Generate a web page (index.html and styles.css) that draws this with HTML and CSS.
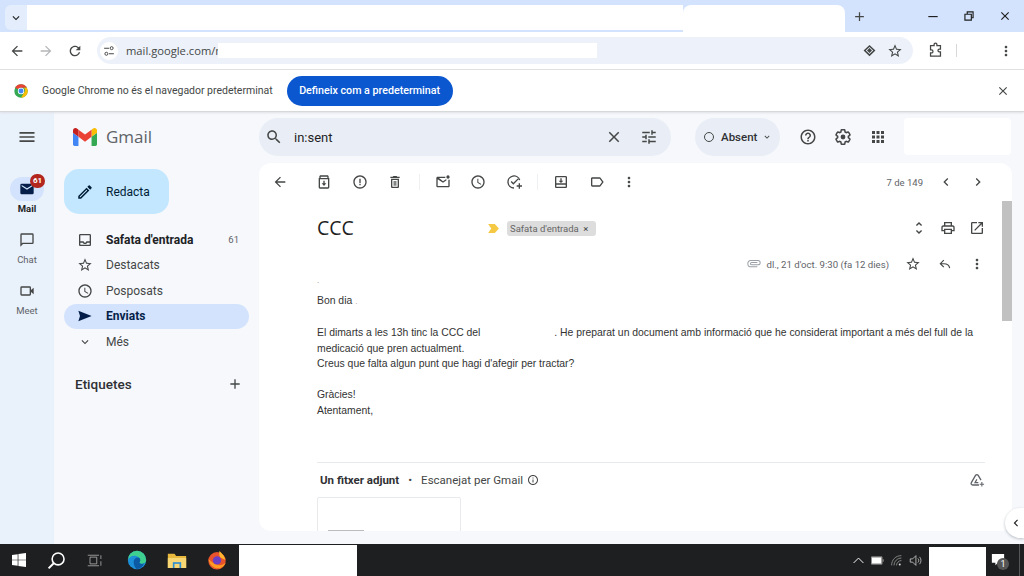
FILE: index.html
```html
<!DOCTYPE html>
<html lang="ca">
  <head>
    <meta charset="UTF-8" />
    <title>CCC - Gmail</title>
    <link rel="stylesheet" href="styles.css">
  </head>
  <body>
    <svg class="sprite" aria-hidden="true">
      <symbol id="i-back" viewBox="0 0 24 24"><path d="M20 11H7.83l5.59-5.59L12 4l-8 8 8 8 1.41-1.41L7.83 13H20v-2z"/></symbol>
      <symbol id="i-forward" viewBox="0 0 24 24"><path d="M12 4l-1.41 1.41L16.17 11H4v2h12.17l-5.58 5.59L12 20l8-8z"/></symbol>
      <symbol id="i-reload" viewBox="0 0 24 24"><path d="M17.65 6.35C16.2 4.9 14.21 4 12 4c-4.42 0-7.99 3.58-7.99 8s3.57 8 7.99 8c3.73 0 6.84-2.55 7.73-6h-2.08c-.82 2.33-3.04 4-5.65 4-3.31 0-6-2.69-6-6s2.69-6 6-6c1.66 0 3.14.69 4.22 1.78L13 11h7V4l-2.35 2.35z"/></symbol>
      <symbol id="i-close" viewBox="0 0 24 24"><path d="M19 6.41L17.59 5 12 10.59 6.41 5 5 6.41 10.59 12 5 17.59 6.41 19 12 13.41 17.59 19 19 17.59 13.41 12z"/></symbol>
      <symbol id="i-search" viewBox="0 0 24 24"><path d="M15.5 14h-.79l-.28-.27C15.41 12.59 16 11.11 16 9.5 16 5.91 13.09 3 9.5 3S3 5.91 3 9.5 5.91 16 9.5 16c1.61 0 3.09-.59 4.23-1.57l.27.28v.79l5 4.99L20.49 19l-4.99-5zm-6 0C7.01 14 5 11.99 5 9.5S7.01 5 9.5 5 14 7.01 14 9.5 11.99 14 9.5 14z"/></symbol>
      <symbol id="i-star" viewBox="0 0 24 24"><path d="M22 9.24l-7.19-.62L12 2 9.19 8.63 2 9.24l5.46 4.73L5.82 21 12 17.27 18.18 21l-1.63-7.03L22 9.24zM12 15.4l-3.76 2.27 1-4.28-3.32-2.88 4.38-.38L12 6.1l1.71 4.04 4.38.38-3.32 2.88 1 4.28L12 15.4z"/></symbol>
      <symbol id="i-more" viewBox="0 0 24 24"><path d="M12 8c1.1 0 2-.9 2-2s-.9-2-2-2-2 .9-2 2 .9 2 2 2zm0 2c-1.1 0-2 .9-2 2s.9 2 2 2 2-.9 2-2-.9-2-2-2zm0 6c-1.1 0-2 .9-2 2s.9 2 2 2 2-.9 2-2-.9-2-2-2z"/></symbol>
      <symbol id="i-clock" viewBox="0 0 24 24"><path d="M11.99 2C6.47 2 2 6.48 2 12s4.47 10 9.99 10C17.52 22 22 17.52 22 12S17.52 2 11.99 2zM12 20c-4.42 0-8-3.58-8-8s3.58-8 8-8 8 3.58 8 8-3.58 8-8 8zm.5-13H11v6l5.25 3.15.75-1.23-4.5-2.67z"/></symbol>
      <symbol id="i-help" viewBox="0 0 24 24"><path d="M11 18h2v-2h-2v2zm1-16C6.48 2 2 6.48 2 12s4.48 10 10 10 10-4.48 10-10S17.52 2 12 2zm0 18c-4.41 0-8-3.59-8-8s3.59-8 8-8 8 3.59 8 8-3.59 8-8 8zm0-14c-2.21 0-4 1.79-4 4h2c0-1.1.9-2 2-2s2 .9 2 2c0 2-3 1.75-3 5h2c0-2.25 3-2.5 3-5 0-2.21-1.79-4-4-4z"/></symbol>
      <symbol id="i-trash" viewBox="0 0 24 24"><path d="M6 19c0 1.1.9 2 2 2h8c1.1 0 2-.9 2-2V7H6v12zM8 9h8v10H8V9zm7.5-5l-1-1h-5l-1 1H5v2h14V4z"/><path d="M10 10.500h1.500v7H10zM12.500 10.500H14v7h-1.500z"/></symbol>
      <symbol id="i-print" viewBox="0 0 24 24"><path d="M19 8h-1V3H6v5H5c-1.66 0-3 1.34-3 3v6h4v4h12v-4h4v-6c0-1.66-1.34-3-3-3zM8 5h8v3H8V5zm8 12v2H8v-4h8v2zm2-2v-2H6v2H4v-4c0-.55.45-1 1-1h14c.55 0 1 .45 1 1v4h-2z"/></symbol>
      <symbol id="i-open" viewBox="0 0 24 24"><path d="M19 19H5V5h7V3H5c-1.11 0-2 .9-2 2v14c0 1.1.89 2 2 2h14c1.1 0 2-.9 2-2v-7h-2v7zM14 3v2h3.59l-9.83 9.83 1.41 1.41L19 6.41V10h2V3h-7z"/></symbol>
      <symbol id="i-tune" viewBox="0 0 24 24"><path d="M3 17v2h6v-2H3zM3 5v2h10V5H3zm10 16v-2h8v-2h-8v-2h-2v6h2zM7 9v2H3v2h4v2h2V9H7zm14 4v-2H11v2h10zm-6-4h2V7h4V5h-4V3h-2v6z"/></symbol>
      <symbol id="i-gear" viewBox="0 0 24 24"><path fill="none" stroke="currentColor" stroke-width="2" d="M19.14 12.94c.04-.3.06-.61.06-.94 0-.32-.02-.64-.07-.94l2.03-1.58c.18-.14.23-.41.12-.61l-1.92-3.32c-.12-.22-.37-.29-.59-.22l-2.39.96c-.5-.38-1.03-.7-1.62-.94l-.36-2.54c-.04-.24-.24-.41-.48-.41h-3.84c-.24 0-.43.17-.47.41l-.36 2.54c-.59.24-1.13.57-1.62.94l-2.39-.96c-.22-.08-.47 0-.59.22L2.74 8.87c-.12.21-.08.47.12.61l2.03 1.58c-.05.3-.09.63-.09.94s.02.64.07.94l-2.03 1.58c-.18.14-.23.41-.12.61l1.92 3.32c.12.22.37.29.59.22l2.39-.96c.5.38 1.03.7 1.62.94l.36 2.54c.05.24.24.41.48.41h3.84c.24 0 .44-.17.47-.41l.36-2.54c.59-.24 1.13-.56 1.62-.94l2.39.96c.22.08.47 0 .59-.22l1.92-3.32c.12-.22.07-.47-.12-.61l-2.01-1.58z"/><circle cx="12" cy="12" r="3.200"/></symbol>
      <symbol id="i-apps" viewBox="0 0 24 24"><path d="M4 8h4V4H4v4zm6 12h4v-4h-4v4zm-6 0h4v-4H4v4zm0-6h4v-4H4v4zm6 0h4v-4h-4v4zm6-10v4h4V4h-4zm-6 4h4V4h-4v4zm6 6h4v-4h-4v4zm0 6h4v-4h-4v4z"/></symbol>
      <symbol id="i-chev-left" viewBox="0 0 24 24"><path d="M15.41 7.41L14 6l-6 6 6 6 1.41-1.41L10.83 12z"/></symbol>
      <symbol id="i-chev-right" viewBox="0 0 24 24"><path d="M8.59 16.59L10 18l6-6-6-6-1.41 1.41L13.17 12z"/></symbol>
      <symbol id="i-chev-down" viewBox="0 0 24 24"><path d="M7.41 8.59L12 13.17l4.59-4.58L18 10l-6 6-6-6z"/></symbol>
      <symbol id="i-plus" viewBox="0 0 24 24"><path d="M19 13h-6v6h-2v-6H5v-2h6V5h2v6h6v2z"/></symbol>
      <symbol id="i-menu" viewBox="0 0 24 24"><path d="M3 18h18v-2H3v2zm0-5h18v-2H3v2zm0-7v2h18V6H3z"/></symbol>
      <symbol id="i-unfold" viewBox="0 0 24 24"><path d="M12 5.830L15.170 9l1.410-1.410L12 3 7.410 7.590 8.830 9 12 5.830zm0 12.340L8.830 15l-1.410 1.410L12 21l4.590-4.590L15.170 15 12 18.170z"/></symbol>
      <symbol id="i-info" viewBox="0 0 24 24"><path d="M11 7h2v2h-2zm0 4h2v6h-2zm1-9C6.480 2 2 6.480 2 12s4.480 10 10 10 10-4.480 10-10S17.520 2 12 2zm0 18c-4.410 0-8-3.590-8-8s3.590-8 8-8 8 3.590 8 8-3.590 8-8 8z"/></symbol>
      <symbol id="i-error" viewBox="0 0 24 24"><path d="M11 7h2v7h-2zm0 8h2v2h-2zm1-13C6.480 2 2 6.480 2 12s4.480 10 10 10 10-4.480 10-10S17.520 2 12 2zm0 18c-4.410 0-8-3.590-8-8s3.590-8 8-8 8 3.590 8 8-3.590 8-8 8z"/></symbol>
      <symbol id="i-reply" viewBox="0 0 24 24"><path d="M20 19c-.6-4-3.400-7.500-10-7.500H5M10 5.500l-6 6 6 6" fill="none" stroke="currentColor" stroke-width="2"/></symbol>
      <symbol id="i-inbox" viewBox="0 0 24 24"><path d="M19 3H5c-1.100 0-2 .9-2 2v14c0 1.100.9 2 2 2h14c1.100 0 2-.9 2-2V5c0-1.100-.9-2-2-2zm0 16H5v-3h3.560c.69 1.190 1.970 2 3.450 2s2.750-.81 3.450-2H19v3zm0-5h-5c0 1.100-.9 2-2 2s-2-.9-2-2H5V5h14v9z"/></symbol>
      <symbol id="i-archive" viewBox="0 0 24 24"><path d="M20 6h-1V4c0-1.100-.9-2-2-2H7c-1.100 0-2 .9-2 2v2H4v14c0 1.100.9 2 2 2h12c1.100 0 2-.9 2-2V6zM7 4h10v2H7V4zm11 16H6V8h12v12z"/><path d="M11 10h2v4h2.500L12 18l-3.500-4H11z"/></symbol>
      <symbol id="i-unread" viewBox="0 0 24 24"><path d="M20 8.500V18H4V8l8 5 5-3.100V7.500L12 11 6 6h9.500V4H4c-1.100 0-2 .9-2 2v12c0 1.100.9 2 2 2h16c1.100 0 2-.9 2-2V8.500z"/><circle cx="19.500" cy="4.500" r="2.500"/></symbol>
      <symbol id="i-task" viewBox="0 0 24 24"><path d="M12 20a8 8 0 1 1 7.600-10.500l1.900-.6A10 10 0 1 0 12 22zM8.500 10.600L7 12l4 4 8-8-1.400-1.400L11 13.200zM19 14v3h-3v2h3v3h2v-3h3v-2h-3v-3z"/></symbol>
      <symbol id="i-move" viewBox="0 0 24 24"><path d="M19 3H5c-1.100 0-2 .9-2 2v14c0 1.100.9 2 2 2h14c1.100 0 2-.9 2-2V5c0-1.100-.9-2-2-2zm0 16H5v-3h14zM5 14V5h14v9z"/><path d="M11 6.500h2V10h2.500L12 13.500 8.500 10H11z"/></symbol>
      <symbol id="i-label" viewBox="0 0 24 24"><path d="M17.630 5.840C17.270 5.330 16.670 5 16 5L5 5.010C3.900 5.010 3 5.900 3 7v10c0 1.100.9 1.990 2 1.990L16 19c.67 0 1.270-.33 1.630-.84L22 12l-4.370-6.160zM16 17H5V7h11l3.550 5L16 17z"/></symbol>
      <symbol id="i-clip" viewBox="0 0 24 24"><path d="M2 11.500A5.500 5.500 0 0 1 7.500 6H18a4 4 0 0 1 0 8H8.500a2.500 2.500 0 0 1 0-5H17v1.500H8.500a1 1 0 0 0 0 2H18a2.500 2.500 0 0 0 0-5H7.500a4 4 0 0 0 0 8H17V17H7.500A5.500 5.500 0 0 1 2 11.500z"/></symbol>
      <symbol id="i-drive" viewBox="0 0 24 24"><path d="M15 19.500H5.500c-1.800 0-3-1.900-2-3.500L9.800 5c.9-1.500 3.100-1.500 4 0l4.200 7.300" fill="none" stroke="currentColor" stroke-width="2"/><path d="M11.800 11L9 16h5" fill="none" stroke="currentColor" stroke-width="1.800"/><path d="M18.500 15v2.500H16v1.600h2.500v2.500h1.600v-2.500h2.500v-1.600h-2.500V15z"/></symbol>
    </svg>

    <div class="tabstrip">
      <div class="tab-search"><svg class="ico ico-s"><use href="#i-chev-down"/></svg></div>
      <div class="tab-blank"></div>
      <div class="tab-active"></div>
      <svg class="ico tab-new"><use href="#i-plus"/></svg>
      <div class="win-btns">
        <svg class="ico" viewBox="0 0 12 12"><path d="M2 6h8v1H2z"/></svg>
        <svg class="ico" viewBox="0 0 12 12"><path d="M4 2h6v6H8.500v2H2V4h2zM5 3v1h3.500v3H9V3zM3 5v4h4.500V5z"/></svg>
        <svg class="ico" viewBox="0 0 24 24"><use href="#i-close"/></svg>
      </div>
    </div>

    <div class="toolbar">
      <svg class="ico nav-btn"><use href="#i-back"/></svg>
      <svg class="ico nav-btn nav-off"><use href="#i-forward"/></svg>
      <svg class="ico nav-btn"><use href="#i-reload"/></svg>
      <div class="omnibox">
        <span class="site-info">
          <svg class="ico ico-xs" viewBox="0 0 16 16"><path d="M1.500 3.500h6.500v1.400H1.500zM8 11h6.500v1.400H8z"/><circle cx="11.500" cy="4.200" r="2" fill="none" stroke="currentColor" stroke-width="1.300"/><circle cx="4.500" cy="11.700" r="2" fill="none" stroke="currentColor" stroke-width="1.300"/></svg>
        </span>
        <span class="url">mail.google.com/m</span>
        <span class="url-mask"></span>
        <svg class="ico lens" viewBox="0 0 24 24"><path d="M12 3l9.500 9-9.500 9-9.500-9zM12 6.500L6 12l6 5.500 6-5.500z" /><path d="M12 8l4 4-4 4-4-4z"/></svg>
        <svg class="ico ico-m"><use href="#i-star"/></svg>
      </div>
      <svg class="ico ext" viewBox="0 0 24 24"><path d="M10 3.500a2 2 0 0 1 4 0V5h5v5h-1.500a2 2 0 0 0 0 4H19v6H5v-4.500h1.200a2.200 2.200 0 0 0 0-4.500H5V5h5z" fill="none" stroke="currentColor" stroke-width="1.800"/></svg>
      <span class="tool-sep"></span>
      <svg class="ico ico-m tool-more"><use href="#i-more"/></svg>
    </div>

    <div class="infobar">
      <svg class="chrome-logo" viewBox="0 0 48 48">
        <circle cx="24" cy="24" r="23" fill="#34a853"/>
        <path d="M24 1a23 23 0 0 1 20 11.500H24a11.500 11.500 0 0 0-10 5.800L4 12.500A23 23 0 0 1 24 1z" fill="#ea4335"/>
        <path d="M44 12.500A23 23 0 0 1 24 47l10-17.300a11.500 11.500 0 0 0 0-17.200z" fill="#fbbc04"/>
        <circle cx="24" cy="24" r="11" fill="#fff"/>
        <circle cx="24" cy="24" r="8.500" fill="#4285f4"/>
      </svg>
      <span class="info-text">Google Chrome no és el navegador predeterminat</span>
      <button class="info-btn">Defineix com a predeterminat</button>
      <svg class="ico ico-m info-close"><use href="#i-close"/></svg>
    </div>

    <div class="app">
      <nav class="rail">
        <svg class="ico rail-menu"><use href="#i-menu"/></svg>
        <div class="rail-item rail-on">
          <span class="rail-pill">
            <svg class="ico ico-m" viewBox="0 0 24 24"><path d="M20 4H4a2 2 0 0 0-2 2v12a2 2 0 0 0 2 2h16a2 2 0 0 0 2-2V6a2 2 0 0 0-2-2zm-8 9L4 8V6l8 5 8-5v2z"/></svg>
            <span class="badge">61</span>
          </span>
          <span class="rail-label">Mail</span>
        </div>
        <div class="rail-item">
          <span class="rail-pill">
            <svg class="ico ico-m" viewBox="0 0 24 24"><path d="M20 2H4a2 2 0 0 0-2 2v18l4-4h14a2 2 0 0 0 2-2V4a2 2 0 0 0-2-2zm0 14H5.200L4 17.200V4h16z"/></svg>
          </span>
          <span class="rail-label">Chat</span>
        </div>
        <div class="rail-item">
          <span class="rail-pill">
            <svg class="ico ico-m" viewBox="0 0 24 24"><path d="M18 10.500V7a2 2 0 0 0-2-2H4a2 2 0 0 0-2 2v10a2 2 0 0 0 2 2h12a2 2 0 0 0 2-2v-3.500l4 3.500V7zM16 17H4V7h12z"/></svg>
          </span>
          <span class="rail-label">Meet</span>
        </div>
      </nav>

      <aside class="side">
        <div class="brand">
          <svg class="gmail-logo" viewBox="52 42 88 66">
            <path fill="#4285f4" d="M58 108h14V74L52 59v43c0 3.320 2.690 6 6 6"/>
            <path fill="#34a853" d="M120 108h14c3.320 0 6-2.690 6-6V59l-20 15"/>
            <path fill="#fbbc04" d="M120 48v26l20-15v-8c0-7.420-8.470-11.650-14.400-7.200"/>
            <path fill="#ea4335" d="M72 74V48l24 18 24-18v26L96 92"/>
            <path fill="#c5221f" d="M52 51v8l20 15V48l-5.600-4.200c-5.940-4.450-14.400-.22-14.400 7.200"/>
          </svg>
          <span class="brand-name">Gmail</span>
        </div>
        <button class="compose">
          <svg class="ico ico-l" viewBox="0 0 24 24"><path d="M3 17.250V21h3.750L17.810 9.940l-3.750-3.750zM5.920 19H5v-.92l9.060-9.060.92.92zM20.710 7.040a1 1 0 0 0 0-1.410l-2.340-2.340a1 1 0 0 0-1.410 0l-1.830 1.830 3.750 3.750z"/></svg>
          Redacta
        </button>
        <ul class="folders">
          <li class="folder folder-bold"><svg class="ico ico-m"><use href="#i-inbox"/></svg>Safata d'entrada<span class="count">61</span></li>
          <li class="folder"><svg class="ico ico-m"><use href="#i-star"/></svg>Destacats</li>
          <li class="folder"><svg class="ico ico-m"><use href="#i-clock"/></svg>Posposats</li>
          <li class="folder folder-on"><svg class="ico ico-m" viewBox="0 0 24 24"><path d="M2 20l20-8L2 4l2.500 8z"/></svg>Enviats</li>
          <li class="folder"><svg class="ico ico-s"><use href="#i-chev-down"/></svg>Més</li>
        </ul>
        <div class="labels-head">Etiquetes<svg class="ico ico-m"><use href="#i-plus"/></svg></div>
      </aside>

      <main class="main">
        <header class="topbar">
          <div class="searchbox">
            <svg class="ico ico-l"><use href="#i-search"/></svg>
            <span class="query">in:sent</span>
            <svg class="ico ico-l search-x"><use href="#i-close"/></svg>
            <svg class="ico ico-l"><use href="#i-tune"/></svg>
          </div>
          <div class="status">
            <span class="status-dot"></span>Absent<svg class="ico ico-xs"><use href="#i-chev-down"/></svg>
          </div>
          <div class="top-icons">
            <svg class="ico ico-l"><use href="#i-help"/></svg>
            <svg class="ico ico-l"><use href="#i-gear"/></svg>
            <svg class="ico ico-l"><use href="#i-apps"/></svg>
          </div>
          <div class="account-mask"></div>
        </header>

        <section class="card">
          <div class="mail-tools">
            <span class="slot slot-back"><svg class="ico ico-m"><use href="#i-back"/></svg></span>
            <span class="slot"><svg class="ico ico-m"><use href="#i-archive"/></svg></span>
            <span class="slot"><svg class="ico ico-m"><use href="#i-error"/></svg></span>
            <span class="slot"><svg class="ico ico-m"><use href="#i-trash"/></svg></span>
            <span class="slot-sep"></span>
            <span class="slot"><svg class="ico ico-m"><use href="#i-unread"/></svg></span>
            <span class="slot"><svg class="ico ico-m"><use href="#i-clock"/></svg></span>
            <span class="slot"><svg class="ico ico-m"><use href="#i-task"/></svg></span>
            <span class="slot-sep"></span>
            <span class="slot"><svg class="ico ico-m"><use href="#i-move"/></svg></span>
            <span class="slot"><svg class="ico ico-m"><use href="#i-label"/></svg></span>
            <span class="slot slot-tight"><svg class="ico ico-m"><use href="#i-more"/></svg></span>
            <span class="pager">7 de 149</span>
            <span class="slot slot-page"><svg class="ico ico-m"><use href="#i-chev-left"/></svg></span>
            <span class="slot slot-page"><svg class="ico ico-m"><use href="#i-chev-right"/></svg></span>
          </div>

          <div class="mail-wrap">
            <article class="mail">
              <div class="subject-row">
                <h1 class="subject">CCC</h1>
                <svg class="marker" viewBox="0 0 12 10"><path d="M0 0h7.500L12 5 7.500 10H0l3.500-5z"/></svg>
                <span class="chip">Safata d'entrada <b>×</b></span>
                <span class="subject-tools">
                  <svg class="ico ico-m"><use href="#i-unfold"/></svg>
                  <svg class="ico ico-m"><use href="#i-print"/></svg>
                  <svg class="ico ico-m"><use href="#i-open"/></svg>
                </span>
              </div>
              <div class="meta-row">
                <svg class="ico ico-m clip"><use href="#i-clip"/></svg>
                <span class="date">dl., 21 d'oct. 9:30 (fa 12 dies)</span>
                <svg class="ico ico-m meta-star"><use href="#i-star"/></svg>
                <svg class="ico ico-s meta-reply"><use href="#i-reply"/></svg>
                <svg class="ico ico-m meta-more"><use href="#i-more"/></svg>
              </div>
              <div class="msg">
                <p class="msg-dot">.</p>
                <p class="msg-hi">Bon dia <small>.</small></p>
                <p>El dimarts a les 13h tinc la CCC del <span class="name-mask"></span>. He preparat un document amb informació que he considerat important a més del full de la medicació que pren actualment.<br>Creus que falta algun punt que hagi d'afegir per tractar?</p>
                <p>Gràcies!<br>Atentament,</p>
              </div>
              <div class="attach">
                <div class="attach-head">
                  <b>Un fitxer adjunt</b><span class="attach-dot">•</span>Escanejat per Gmail
                  <svg class="ico ico-xs attach-info"><use href="#i-info"/></svg>
                  <svg class="ico ico-m attach-drive"><use href="#i-drive"/></svg>
                </div>
                <div class="attach-card"><span class="attach-line"></span></div>
              </div>
            </article>
            <div class="scrollbar"><div class="scroll-thumb"></div></div>
          </div>
        </section>
        <button class="panel-toggle"><svg class="ico ico-s"><use href="#i-chev-left"/></svg></button>
      </main>
    </div>

    <footer class="taskbar">
      <svg class="tb-win" viewBox="0 0 16 16"><path fill="#fff" d="M0 2.200l6.500-.9v6.300H0zM7.300 1.200L16 0v7.600H7.300zM0 8.400h6.500v6.300L0 13.800zM7.300 8.400H16V16l-8.700-1.200z"/></svg>
      <svg class="tb-search" viewBox="0 0 24 24"><circle cx="14" cy="10" r="7.500" fill="none" stroke="#fff" stroke-width="2"/><path d="M8.500 15.500L2 22" stroke="#fff" stroke-width="2.500"/></svg>
      <svg class="tb-view" viewBox="0 0 20 16"><path fill="none" stroke="#bbb" d="M4 3.500h9v9H4zM1 1h15M1 15h15M18.500 1v5M18.500 9v6"/></svg>
      <svg class="tb-app tb-edge" viewBox="0 0 24 24">
        <circle cx="12" cy="12" r="11" fill="#1d8fd8"/>
        <path d="M1 12a11 11 0 0 1 22 0c0 3-2.500 4.500-5 4.500-2 0-3.500-.7-3.500-1.500 0-.6 1-1 1-2.500C15.500 9 12 7 9 7c-4 0-7 2.500-8 5z" fill="#3fcf8e"/>
        <path d="M8 14c0-3 2.500-5 5-5 2 0 3 1.500 3 3.500 0 1-1 1.500-1 2.500 0 1.500 3 2.500 5.500 1A11 11 0 0 1 12 23c-2.500-1.500-4-5-4-9z" fill="#0c59a4"/>
      </svg>
      <svg class="tb-app tb-folder" viewBox="0 0 24 20">
        <path d="M1 2h8l2 2.500h12V19H1z" fill="#e8b93c"/>
        <path d="M1 7h22v12H1z" fill="#f7d774"/>
        <path d="M7 12h10v7H7z" fill="#2f8fd3"/>
        <path d="M9 14h6v5H9z" fill="#f7d774"/>
      </svg>
      <svg class="tb-app tb-fox" viewBox="0 0 24 24">
        <circle cx="12" cy="13" r="10.500" fill="#e8532b"/>
        <path d="M15 1c2 3 6 5 7 11l-6-3c-1-2-2-4-1-8z" fill="#ffb52e"/>
        <path d="M2 11c1 7 6 11 11 11 4 0 8-2.500 9.500-7-2 2-5 4-9 3-4-.8-7-3-11.500-7z" fill="#ff9a23"/>
        <circle cx="12" cy="12.500" r="5" fill="#6b3fc4"/>
      </svg>
      <div class="tb-mask"></div>
      <div class="tray">
        <svg class="tray-ico" viewBox="0 0 16 16"><path d="M2 11l6-6 6 6" fill="none" stroke="#fff" stroke-width="1.200"/></svg>
        <svg class="tray-ico" viewBox="0 0 16 16"><path fill="#fff" d="M1 4h12v8H1z"/><path fill="none" stroke="#aaa" d="M.5 3.500h13v9H.5zM15 6.500v3"/></svg>
        <svg class="tray-ico" viewBox="0 0 16 16"><path fill="none" stroke="#999" d="M2 14C2 7 7 2 14 2M5 14c0-5 4-9 9-9M8 14c0-3 3-6 6-6"/><circle cx="12" cy="13" r="1.200" fill="#ddd"/></svg>
        <svg class="tray-ico" viewBox="0 0 16 16"><path fill="none" stroke="#ccc" d="M1.500 6h3l4-4v12l-4-4h-3zM11 5.500c1.300 1.300 1.300 3.700 0 5M13 3.500c2.300 2.300 2.300 6.700 0 9"/></svg>
        <div class="clock-mask"></div>
        <span class="notify">
          <svg class="notify-ico" viewBox="0 0 16 16"><path fill="#fff" d="M1 1h14v10H8l-3 3v-3H1z"/></svg>
          <span class="notify-num">1</span>
        </span>
        <span class="show-desk"></span>
      </div>
    </footer>
  </body>
</html>
```

FILE: styles.css
```css
* {
  box-sizing: border-box;
}
html,
body {
  margin: 0;
  padding: 0;
  width: 1024px;
  height: 576px;
  overflow: hidden;
}
body {
  font-family: Roboto, "Liberation Sans", sans-serif;
  color: #1f1f1f;
  background: #fff;
  display: flex;
  flex-direction: column;
}
p,
h1,
ul {
  margin: 0;
  padding: 0;
}
button {
  border: none;
  font-family: inherit;
  padding: 0;
}
.sprite {
  display: none;
}

/* icon sizes */
.ico {
  width: 16px;
  height: 16px;
  fill: currentColor;
  color: #444746;
  flex: none;
}
.ico-xs {
  width: 12px;
  height: 12px;
}
.ico-s {
  width: 14px;
  height: 14px;
}
.ico-m {
  width: 16px;
  height: 16px;
}
.ico-l {
  width: 18px;
  height: 18px;
}

/* browser tabs */
.tabstrip {
  height: 32px;
  flex: none;
  background: #d3e3fd;
  display: flex;
  align-items: flex-start;
  padding: 5px 0 0 5px;
}
.tab-search {
  width: 22px;
  height: 25px;
  background: #e4edfb;
  border-radius: 6px 0 0 6px;
  display: flex;
  align-items: center;
  justify-content: center;
}
.tab-search .ico {
  color: #1f1f1f;
}
.tab-blank {
  width: 656px;
  height: 25px;
  background: #fff;
}
.tab-active {
  width: 162px;
  height: 27px;
  background: #fff;
  border-radius: 8px 8px 0 0;
}
.tab-new {
  width: 15px;
  height: 15px;
  margin: 4px 0 0 7px;
}
.win-btns {
  display: flex;
  gap: 22px;
  margin: 4px 0 0 auto;
  padding-right: 12px;
}
.win-btns .ico {
  width: 14px;
  height: 14px;
  color: #1f1f1f;
}

/* address bar */
.toolbar {
  height: 38px;
  flex: none;
  background: #fff;
  border-radius: 8px 8px 0 0;
  border-bottom: 1px solid #e0e0e0;
  display: flex;
  align-items: center;
  padding: 5px 10px 5px 9px;
}
.nav-btn {
  margin-right: 13px;
}
.nav-off {
  color: #b5b7b9;
}
.omnibox {
  width: 816px;
  height: 27px;
  margin-left: 1px;
  background: #edf2fa;
  border-radius: 14px;
  display: flex;
  align-items: center;
  padding-right: 10px;
  font-size: 12px;
  color: #444746;
}
.site-info {
  width: 18px;
  height: 18px;
  margin-left: 3px;
  border-radius: 50%;
  background: #fff;
  display: flex;
  align-items: center;
  justify-content: center;
  color: #444746;
}
.url {
  margin-left: 8px;
  width: 92px;
  overflow: hidden;
  white-space: nowrap;
  font-family: "Open Sans", Roboto, sans-serif;
  font-size: 11.200px;
}
.url-mask {
  width: 379px;
  height: 15px;
  background: #fff;
}
.lens {
  width: 15px;
  height: 15px;
  margin-left: auto;
  margin-right: 10px;
}
.ext {
  width: 17px;
  height: 17px;
  margin-left: 14px;
}
.tool-sep {
  width: 1px;
  height: 13px;
  background: #d8d8d8;
  margin-left: 12px;
}
.tool-more {
  margin-left: auto;
}

/* default browser bar */
.infobar {
  height: 42px;
  flex: none;
  background: #fff;
  border-bottom: 1px solid #d6d8da;
  display: flex;
  align-items: center;
  padding-left: 14px;
  box-shadow: 0 1px 2px #dfe1e5;
  position: relative;
}
.chrome-logo {
  width: 14px;
  height: 14px;
}
.info-text {
  margin-left: 14px;
  color: #444746;
  font-size: 10.480px;
}
.info-btn {
  margin-left: 14px;
  width: 166px;
  height: 30px;
  background: #0b57d0;
  color: #fff;
  border-radius: 15px;
  font-size: 10.700px;
  font-weight: 500;
}
.info-close {
  margin-left: auto;
  margin-right: 14px;
  width: 14px;
  height: 14px;
}

/* gmail */
.app {
  height: 432px;
  flex: none;
  display: flex;
  background: #f6f8fc;
}
.rail {
  width: 54px;
  flex: none;
  background: #e9f1fb;
  display: flex;
  flex-direction: column;
  align-items: center;
}
.rail-menu {
  width: 20px;
  height: 20px;
  margin: 15px 0 30px;
}
.rail-item {
  display: flex;
  flex-direction: column;
  align-items: center;
  height: 51px;
}
.rail-pill {
  width: 34px;
  height: 24px;
  border-radius: 12px;
  display: flex;
  align-items: center;
  justify-content: center;
  position: relative;
}
.rail-on .rail-pill {
  background: #d3e3fd;
}
.rail-on .rail-pill .ico {
  color: #041e49;
}
.rail-label {
  font-size: 9.500px;
  color: #5f6368;
  margin-top: 2px;
}
.rail-on .rail-label {
  color: #1f1f1f;
  font-weight: 700;
}
.badge {
  position: absolute;
  top: -3px;
  left: 20px;
  width: 15px;
  height: 14px;
  border-radius: 7px;
  background: #b3261e;
  color: #fff;
  font-size: 8px;
  font-weight: 700;
  line-height: 14px;
  text-align: center;
}

.side {
  width: 205px;
  flex: none;
  padding: 16px 10px 0 10px;
}
.brand {
  display: flex;
  align-items: center;
  padding-left: 9px;
  height: 18px;
}
.gmail-logo {
  width: 24px;
  height: 18px;
}
.brand-name {
  margin-left: 9px;
  padding-bottom: 2px;
  font-size: 17px;
  color: #5f6368;
  font-family: "Open Sans", Roboto, sans-serif;
}
.compose {
  width: 105px;
  height: 45px;
  margin-top: 23px;
  border-radius: 15px;
  background: #c2e7ff;
  color: #001d35;
  display: flex;
  align-items: center;
  gap: 12px;
  padding-left: 12px;
  font-size: 12px;
}
.compose .ico {
  color: #001d35;
}
.folders {
  list-style: none;
  margin-top: 13px;
}
.folder {
  height: 25.500px;
  border-radius: 13px;
  display: flex;
  align-items: center;
  gap: 13px;
  padding-left: 13px;
  padding-right: 10px;
  font-size: 12px;
  color: #444746;
}
.folder .ico-s {
  margin: 0 1px;
}
.folder-bold {
  font-weight: 700;
  color: #202124;
}
.folder-on {
  background: #d3e3fd;
  color: #041e49;
  font-weight: 700;
}
.folder-on .ico {
  color: #041e49;
}
.count {
  margin-left: auto;
  font-size: 9.500px;
  font-weight: 400;
  color: #5f6368;
}
.labels-head {
  display: flex;
  align-items: center;
  justify-content: space-between;
  margin-top: 21px;
  padding: 0 6px 0 11px;
  font-size: 13.500px;
  font-weight: 500;
  color: #303134;
}

.main {
  flex: 1;
  min-width: 0;
  position: relative;
  display: flex;
  flex-direction: column;
}
.topbar {
  height: 51px;
  flex: none;
  display: flex;
  align-items: flex-start;
  padding-top: 6px;
}
.searchbox {
  width: 412px;
  height: 38px;
  border-radius: 19px;
  background: #e9eef6;
  display: flex;
  align-items: center;
  padding: 0 13px 0 6px;
}
.query {
  margin-left: 11px;
  font-size: 13px;
  color: #1f1f1f;
}
.search-x {
  margin-left: auto;
  margin-right: 17px;
}
.status {
  width: 85px;
  height: 38px;
  margin-left: 24px;
  border-radius: 19px;
  background: #e9eef6;
  display: flex;
  align-items: center;
  padding-left: 9px;
  font-size: 11.500px;
  font-weight: 500;
  color: #303134;
}
.status-dot {
  width: 10px;
  height: 10px;
  border: 1.200px solid #444746;
  border-radius: 50%;
  margin-right: 7px;
}
.status .ico {
  width: 10px;
  height: 10px;
  margin-left: 5px;
}
.top-icons {
  display: flex;
  gap: 17px;
  height: 38px;
  align-items: center;
  margin-left: 19px;
}
.account-mask {
  width: 107px;
  height: 37px;
  margin-left: 17px;
  background: #fff;
  border-radius: 4px;
}

.card {
  width: 753px;
  height: 368px;
  background: #fff;
  border-radius: 12px;
  display: flex;
  flex-direction: column;
  overflow: hidden;
}
.mail-tools {
  height: 38px;
  flex: none;
  display: flex;
  align-items: center;
  padding-left: 3px;
}
.slot {
  width: 35.500px;
  display: flex;
  justify-content: center;
}
.slot-back {
  margin-right: 9px;
}
.slot-sep {
  width: 1px;
  height: 16px;
  margin: 0 5.500px;
  background: #eef0f2;
}
.slot-tight {
  width: 29px;
}
.pager {
  margin-left: auto;
  font-size: 9.500px;
  color: #5f6368;
  margin-right: 7px;
}
.slot-page {
  width: 32px;
}
.slot-page:last-child {
  margin-right: 18px;
}

.mail-wrap {
  flex: 1;
  min-height: 0;
  display: flex;
}
.mail {
  flex: 1;
  min-width: 0;
  padding: 13px 17px 0 58px;
  overflow: hidden;
}
.subject-row {
  height: 28px;
  display: flex;
  align-items: center;
}
.subject {
  font-size: 19.500px;
  font-weight: 400;
  color: #1f1f1f;
  width: 171px;
  padding-bottom: 2px;
  font-family: "Open Sans", Roboto, sans-serif;
}
.marker {
  width: 11px;
  height: 9px;
  fill: #f6c945;
}
.chip {
  margin-left: 8px;
  height: 15px;
  width: 89px;
  padding-left: 3px;
  background: #dddddd;
  border-radius: 3px;
  font-size: 9.500px;
  line-height: 15px;
  color: #666;
  white-space: nowrap;
}
.chip b {
  font-weight: 400;
  margin-left: 2px;
  color: #444;
}
.subject-tools {
  margin-left: auto;
  display: flex;
  gap: 13px;
}
.meta-row {
  height: 24px;
  margin-top: 10px;
  display: flex;
  align-items: center;
  justify-content: flex-end;
}
.clip {
  color: #9aa0a6;
}
.date {
  margin-left: 5px;
  font-size: 9.600px;
  color: #5f6368;
}
.meta-star {
  margin-left: 16px;
}
.meta-reply {
  margin-left: 17px;
}
.meta-more {
  margin-left: 17px;
}
.msg {
  font-family: "Liberation Sans", Arial, sans-serif;
  font-size: 10.400px;
  line-height: 15.500px;
  color: #333;
}
.msg p {
  margin-bottom: 15.500px;
}
.msg .msg-dot {
  height: 10px;
  line-height: 10px;
  margin-bottom: 7px;
  color: #888;
  font-size: 8px;
}
.msg small {
  color: #999;
  font-size: 8px;
}
.name-mask {
  display: inline-block;
  width: 71px;
}
.attach {
  margin-top: 43.500px;
  border-top: 1px solid #e8eaed;
}
.attach-head {
  height: 34px;
  display: flex;
  align-items: center;
  padding-left: 3px;
  font-size: 11.500px;
  color: #444746;
}
.attach-head b {
  font-weight: 700;
  color: #303134;
}
.attach-dot {
  margin: 0 9px;
}
.attach-info {
  margin-left: 4px;
}
.attach-drive {
  margin-left: auto;
  color: #5f6368;
}
.attach-card {
  width: 144px;
  height: 60px;
  border: 1px solid #e8eaed;
  border-radius: 2px 2px 0 0;
  padding: 32px 0 0 10px;
}
.attach-line {
  display: block;
  width: 36px;
  height: 1px;
  background: #bbb;
}
.scrollbar {
  width: 10px;
  flex: none;
  background: #fff;
}
.scroll-thumb {
  height: 120px;
  background: #c1c1c1;
}
.panel-toggle {
  position: absolute;
  right: 0;
  bottom: 6px;
  width: 19px;
  height: 30px;
  background: #fff;
  border-radius: 15px 0 0 15px;
  box-shadow: 0 1px 3px #b9bdc3;
  display: flex;
  align-items: center;
  padding-left: 4px;
}
.panel-toggle .ico {
  color: #1f1f1f;
}

/* windows taskbar */
.taskbar {
  height: 32px;
  flex: none;
  background: #1e1f20;
  display: flex;
  align-items: center;
  position: relative;
}
.tb-win {
  width: 14px;
  height: 14px;
  margin-left: 12px;
}
.tb-search {
  width: 19px;
  height: 19px;
  margin-left: 21px;
}
.tb-view {
  width: 15px;
  height: 13px;
  margin-left: 21px;
}
.tb-app {
  width: 20px;
  height: 20px;
}
.tb-edge {
  margin-left: 25px;
}
.tb-folder {
  margin-left: 20px;
  height: 17px;
}
.tb-fox {
  margin-left: 20px;
}
.tb-mask {
  width: 118px;
  height: 31px;
  margin: 1px 0 0 12px;
  background: #fff;
}
.tray {
  margin-left: auto;
  display: flex;
  align-items: center;
  height: 32px;
}
.tray-ico {
  width: 13px;
  height: 13px;
  margin-right: 6px;
}
.clock-mask {
  width: 57px;
  height: 29px;
  margin: 3px 0 0 1px;
  background: #fff;
}
.notify {
  width: 14px;
  height: 14px;
  margin-left: 5px;
  position: relative;
}
.notify-ico {
  width: 14px;
  height: 14px;
  display: block;
}
.notify-num {
  position: absolute;
  left: 6px;
  top: 5px;
  width: 12px;
  height: 12px;
  border-radius: 50%;
  background: #555;
  color: #fff;
  font-size: 9px;
  line-height: 12px;
  text-align: center;
}
.show-desk {
  width: 1px;
  height: 32px;
  margin-left: 14px;
  margin-right: 4px;
  background: #555;
}
```
